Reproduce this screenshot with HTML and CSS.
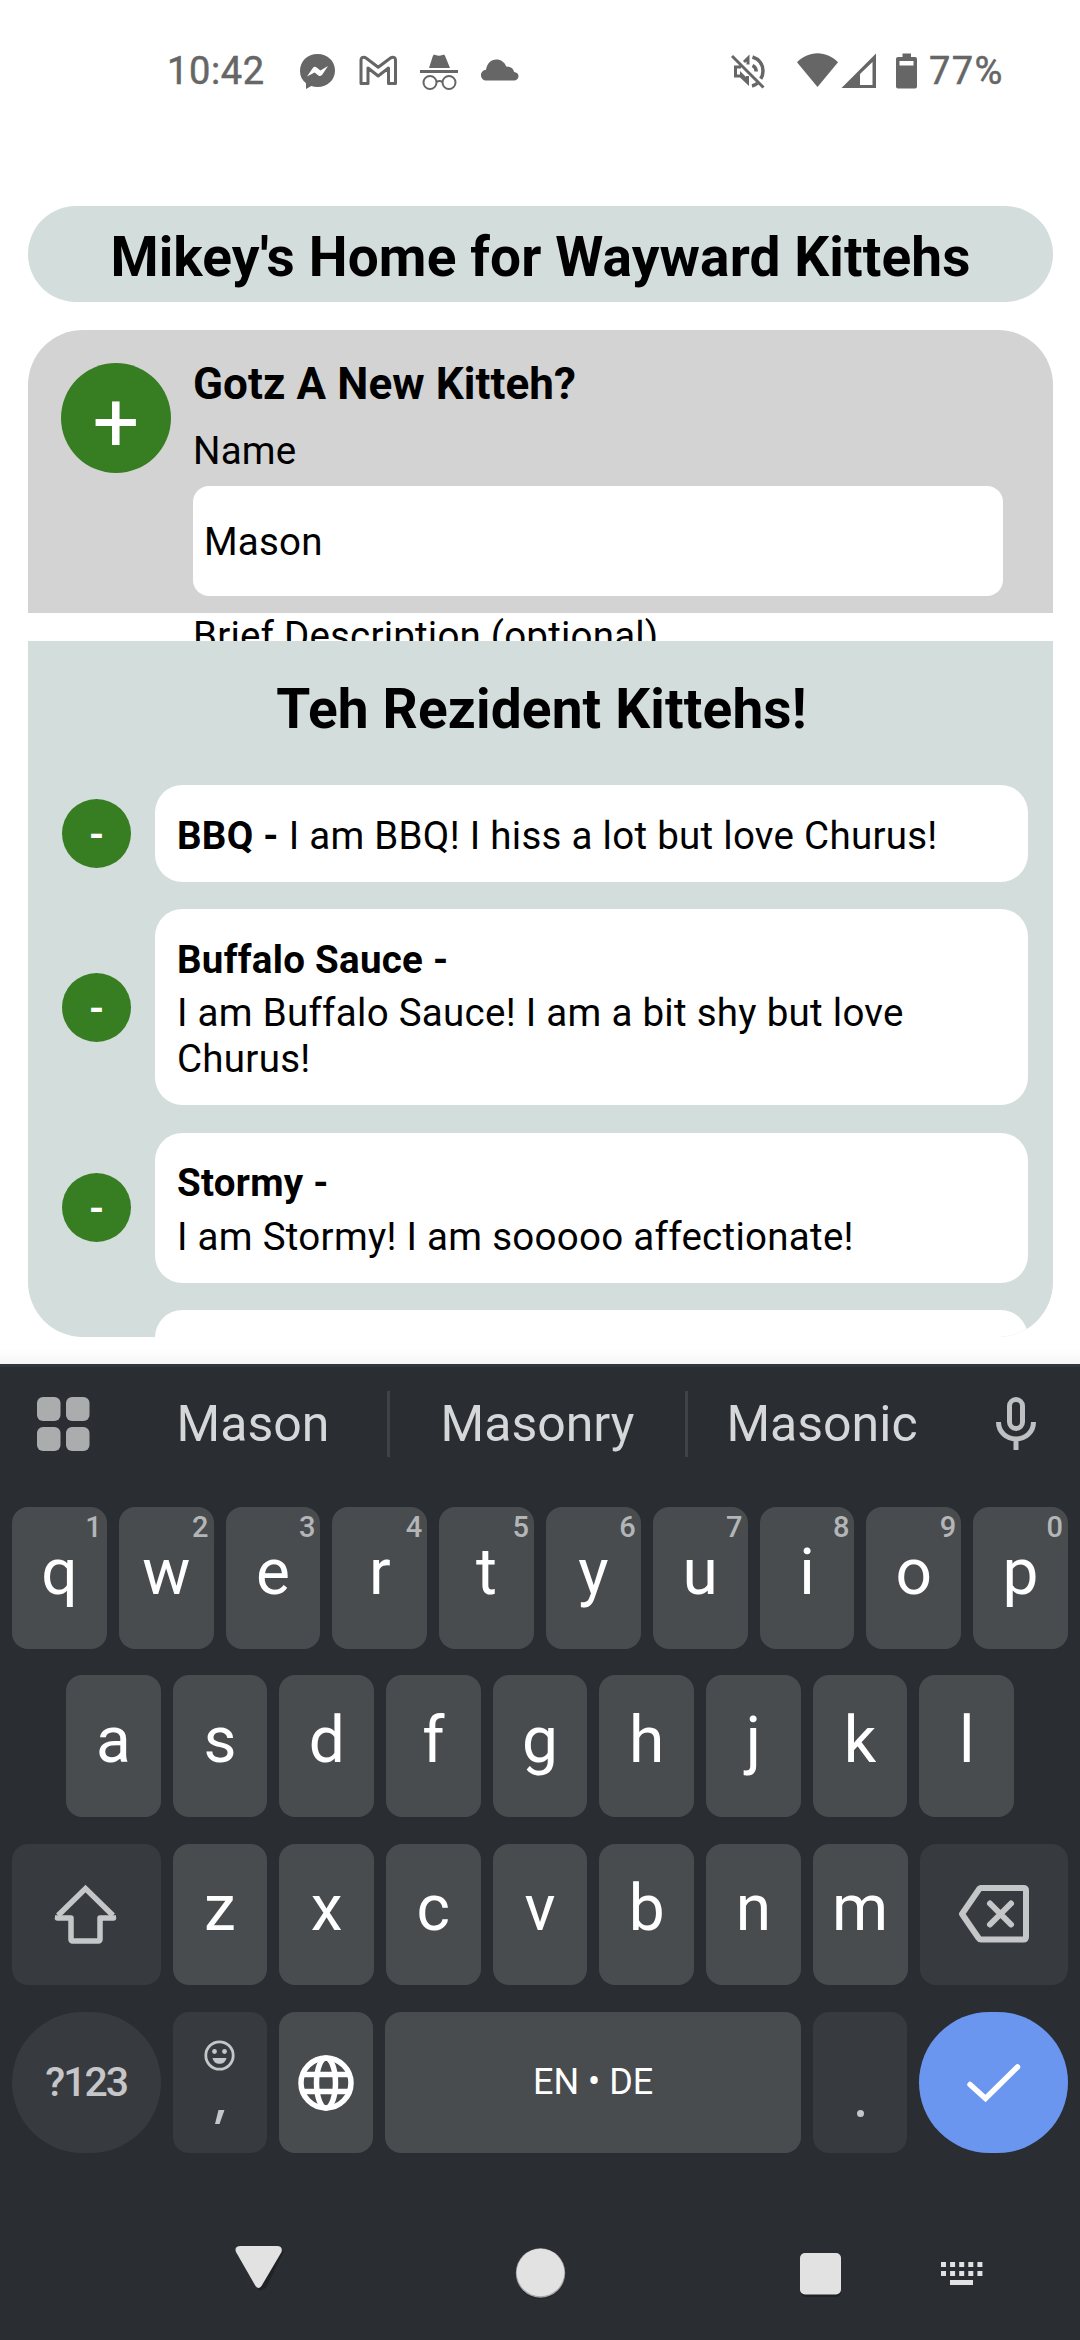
FILE: index.html
```html
<!DOCTYPE html>
<html lang="en">
<head>
<meta charset="utf-8">
<title>Mikey's Home for Wayward Kittehs</title>
<link rel="stylesheet" href="styles.css">
</head>
<body>
<div class="screen">
  <header class="status">
    <div class="status-left">
      <span class="clock">10:42</span>
      <svg width="36" height="46" viewBox="300 48 36 46"><path fill="#666" d="M317.500 54c-10 0-17.500 7.300-17.500 17 0 5.200 2.200 9.300 6 12.300V89l5.300-2.900c1.900.6 4 .9 6.200.9 10 0 17.500-7 17.500-16.500S327.500 54 317.500 54z"/><path fill="#fff" d="M307 76.500 312.800 68c1-1.300 2.600-1.500 3.800-.6l3.800 3L328 66l-5.800 8.800c-.9 1.300-2.600 1.500-3.800.6l-3.800-3z"/></svg>
      <svg width="38" height="46" viewBox="359 48 38 46"><path fill="none" stroke="#666" stroke-width="3" stroke-linejoin="round" d="M361 83.500V60c0-3 3-3.500 5-2l12.200 9.300L390.500 58c2-1.500 5-1 5 2v23.500h-7V68l-10.300 8-10.200-8v15.500z"/></svg>
      <svg width="38" height="46" viewBox="420 48 38 46"><path fill="#666" d="M429 68l3.700-11.500c.5-1.800 1.500-2 2.800-1.500 2.300.9 4.700.9 7 0 1.300-.5 2.300-.3 2.800 1.500L450 68zM420 70h38v3h-38z"/><g fill="none" stroke="#666" stroke-width="2"><circle cx="430" cy="82.500" r="6.500"/><circle cx="449" cy="82.500" r="6.500"/><path d="M436.500 82c2-1.200 4-1.200 6 0"/></g></svg>
      <svg width="38" height="46" viewBox="482 48 38 46"><path fill="#666" d="M487.500 80.500c-3.200 0-5.500-2.400-5.500-5.300 0-3 2.300-5.200 5-5.400C488 63.500 492 59.500 497.300 59.500c4.700 0 8.300 2.700 9.900 7 4.300-.2 7.300 2.300 7.900 5.500 2.600.2 4.400 1.900 4.400 4.200 0 2.500-2 4.300-4.500 4.300z"/></svg>
    </div>
    <div class="status-right">
      <svg width="34" height="46" viewBox="731 48 34 46"><path fill="none" stroke="#666" stroke-width="3" d="M732 56l31.500 31.500M741 67h-5.500v9h5l7 6.500V76M744 62l4-4v6.500"/><path fill="#666" d="M748 79l-8-8v5l8 8z"/><path fill="none" stroke="#666" stroke-width="3.500" d="M752.500 57c6.500 2 10.500 7.500 10.500 14 0 3-.8 5.500-2.300 7.800M752.500 65.500c2.500 1.200 3.700 3 3.700 6M752 86c2.500-.6 4.300-1.600 5.500-2.700"/></svg>
      <svg width="42" height="46" viewBox="797 48 42 46"><path fill="#666" d="M797 62.300c5.500-5.500 12.500-9 20.500-9s15 3.500 20.500 9L817.500 87z"/></svg>
      <svg width="35" height="46" viewBox="841 48 35 46"><path fill="#666" fill-rule="evenodd" d="M841.500 88 876 53.500V88zM860 74v11h12.500V62z"/></svg>
      <svg width="22" height="46" viewBox="896 48 22 46"><path fill="#666" fill-rule="evenodd" d="M902.500 53.500h8.500V57h4a2 2 0 0 1 2 2v27.500a2 2 0 0 1-2 2h-17a2 2 0 0 1-2-2V59a2 2 0 0 1 2-2h4.500zM899.500 61v4.500h14V61z"/></svg>
      <span class="percent">77%</span>
    </div>
  </header>

  <main class="app">
    <h1 class="title">Mikey's Home for Wayward Kittehs</h1>

    <section class="form">
      <button class="round add">+</button>
      <div class="fields">
        <h2 class="form-title">Gotz A New Kitteh?</h2>
        <div class="label">Name</div>
        <div class="input">Mason</div>
        <div class="label next">Brief Description (optional)</div>
      </div>
    </section>

    <section class="list">
      <h1 class="list-title">Teh Rezident Kittehs!</h1>
      <div class="row"><button class="round remove">-</button><div class="card"><b>BBQ -</b> I am BBQ! I hiss a lot but love Churus!</div></div>
      <div class="row"><button class="round remove">-</button><div class="card"><b class="name">Buffalo Sauce -</b>I am Buffalo Sauce! I am a bit shy but love Churus!</div></div>
      <div class="row"><button class="round remove">-</button><div class="card"><b class="name">Stormy -</b>I am Stormy! I am sooooo affectionate!</div></div>
      <div class="row top"><div class="card empty"></div></div>
    </section>
  </main>

  <section class="keyboard">
    <div class="suggestions">
      <svg class="apps" width="53" height="54" viewBox="0 0 53 54" fill="#abacae"><rect width="23.500" height="24" rx="6"/><rect x="29" width="23.500" height="24" rx="6"/><rect y="30" width="23.500" height="24" rx="6"/><rect x="29" y="30" width="23.500" height="24" rx="6"/></svg>
      <span class="word">Mason</span>
      <span class="word mid">Masonry</span>
      <span class="word">Masonic</span>
      <svg class="mic" width="40" height="54" viewBox="996 1397 40 54" fill="none" stroke="#bfc0c2" stroke-width="5"><rect x="1009.500" y="1399.500" width="13" height="29" rx="6.500"/><path d="M998.500 1422c0 10 8 17 17.500 17s17.500-7 17.500-17M1016 1439v11"/></svg>
    </div>

    <div class="keys">
      <div class="key">q<sup>1</sup></div><div class="key">w<sup>2</sup></div><div class="key">e<sup>3</sup></div><div class="key">r<sup>4</sup></div><div class="key">t<sup>5</sup></div><div class="key">y<sup>6</sup></div><div class="key">u<sup>7</sup></div><div class="key">i<sup>8</sup></div><div class="key">o<sup>9</sup></div><div class="key">p<sup>0</sup></div>
    </div>
    <div class="keys inset">
      <div class="key">a</div><div class="key">s</div><div class="key">d</div><div class="key">f</div><div class="key">g</div><div class="key">h</div><div class="key">j</div><div class="key">k</div><div class="key">l</div>
    </div>
    <div class="keys">
      <div class="key dark wide"><svg width="64" height="62" viewBox="54 1882 64 62" fill="none" stroke="#c5c6c8" stroke-width="5.500" stroke-linejoin="round"><path stroke-linejoin="miter" d="M58 1914.500 85.500 1887.500 113 1914.500"/><path d="M58 1914.500l-.5 2.500H71v21.500a1.500 1.500 0 0 0 1.500 1.500h26a1.500 1.500 0 0 0 1.500-1.500V1917h13.500l-.5-2.500"/></svg></div>
      <div class="key">z</div><div class="key">x</div><div class="key">c</div><div class="key">v</div><div class="key">b</div><div class="key">n</div><div class="key">m</div>
      <div class="key dark wide"><svg width="72" height="60" viewBox="956 1884 72 60" fill="none" stroke="#c5c6c8" stroke-width="6" stroke-linejoin="round"><path d="M979 1888h42.500q2.500 0 2.500 2.500v46q0 3-2.500 3H979q-1.500 0-2.500-1.500L960 1914l16.500-24q1-2 2.500-2z"/><path stroke-linecap="round" d="M988 1903.500l21 21M1009 1903.500l-21 21"/></svg></div>
    </div>
    <div class="keys">
      <div class="key dark wide pill">?123</div>
      <div class="key dark comma"><svg width="31" height="31" viewBox="-15.500 -15.500 31 31"><circle r="13.700" fill="none" stroke="#c5c6c8" stroke-width="2.800"/><circle cx="-5" cy="-4" r="2.400" fill="#c5c6c8"/><circle cx="5" cy="-4" r="2.400" fill="#c5c6c8"/><path fill="#c5c6c8" d="M-7 2.500H7C6 6.500 3.500 8.300 0 8.300S-6 6.500-7 2.500z"/></svg><svg class="comma-mark" width="12" height="16" viewBox="0 0 12 16"><path fill="#c5c6c8" d="M4.500 1H10.500L5.500 15H1z"/></svg></div>
      <div class="key globe"><svg width="56" height="56" viewBox="-28 -28 56 56" fill="none" stroke="#fff" stroke-width="5.500"><circle r="25"/><ellipse rx="9.500" ry="25"/><path d="M-24-8.500H24M-24 8.500H24"/></svg></div>
      <div class="key space">EN • DE</div>
      <div class="key dark dot"><i></i></div>
      <div class="key wide pill enter"><svg width="56" height="42" viewBox="966 2061 56 42" fill="none" stroke="#fff" stroke-width="5.500" stroke-linecap="round"><path stroke-linejoin="miter" d="M970 2083.500l15.500 14L1017.500 2066"/></svg></div>
    </div>

    <nav class="nav">
      <svg width="1080" height="70" viewBox="0 2240 1080 70">
        <path fill="#1f2225" d="M244 2252h40l-18 37-7 3z"/>
        <path fill="#e2e2e2" d="M241 2247h36q6 0 4.500 6l-20 34q-3 4-6 0l-19.500-34q-2-6 4.500-6z"/>
        <circle cx="540.500" cy="2276" r="24" fill="#1f2225"/><circle cx="540.500" cy="2274" r="24.700" fill="#a3a4a5"/><circle cx="540.500" cy="2273.500" r="23.800" fill="#e2e2e2"/>
        <rect x="801" y="2257" width="40" height="41" rx="5" fill="#1f2225"/><rect x="800" y="2254" width="41" height="41.500" rx="5" fill="#e2e2e2"/>
        <path stroke="#e2e2e2" stroke-width="5" stroke-dasharray="5 4.100" d="M941 2265.500h42M941 2274.500h42"/><path fill="#e2e2e2" d="M950 2281h23v5h-23z"/>
      </svg>
    </nav>
  </section>
</div>
</body>
</html>
```
FILE: styles.css
```css
* { box-sizing: border-box; }
body { margin: 0; background: #fff; font-family: Roboto, sans-serif; color: #000; }
h1, h2 { margin: 0; }
button { border: 0; padding: 0; font-family: inherit; }
svg { display: block; flex: none; }

.screen { width: 1080px; height: 2340px; overflow: hidden; display: flex; flex-direction: column; }

.status { height: 206px; padding: 48px 75px 0 167px; display: flex; justify-content: space-between; color: #666; font-size: 38px; font-weight: 400; line-height: 46px; -webkit-text-stroke: 0.5px #666; }
.status-left, .status-right { display: flex; height: 46px; }
.clock { width: 133px; letter-spacing: 0.6px; }
.status-left svg + svg { margin-left: 23px; }
.status-right svg:nth-child(1) { margin-right: 32px; }
.status-right svg:nth-child(2) { margin-right: 2px; }
.status-right svg:nth-child(3) { margin-right: 20px; }
.status-right svg:nth-child(4) { margin-right: 11px; }
.percent { width: 76px; letter-spacing: 1.4px; }

.app { height: 1158px; padding: 0 27px 27px 28px; background: linear-gradient(#fff 1142px, #f6f6f6 1158px); }
.title { height: 96px; padding-top: 19px; border-radius: 48px; background: #d3dddb; font-size: 55px; line-height: 64px; letter-spacing: 0.12px; text-align: center; white-space: nowrap; }

.form { margin-top: 28px; height: 283px; padding: 28px 50px 0 33px; display: flex; gap: 22px; border-radius: 55px 55px 0 0; background: #d3d3d3; }
.round { flex: none; border-radius: 50%; background: #377d22; color: #fff; text-align: center; }
.add { width: 110px; height: 110px; margin-top: 5px; padding-top: 9px; font-size: 82.5px; line-height: 101px; }
.fields { flex: 1; letter-spacing: 0.2px; }
.form-title { font-size: 44px; line-height: 52px; letter-spacing: 0.1px; }
.label { margin-top: 17.5px; font-size: 38.5px; line-height: 46px; }
.input { margin-top: 12.5px; height: 110px; padding: 1px 11px 0; border-radius: 16px; background: #fff; font-size: 38.5px; line-height: 110px; }
.label.next { margin-top: 17px; }

.list { position: relative; margin-top: 28px; height: 696px; padding: 36px 25px 0 34px; overflow: hidden; border-radius: 0 0 55px 55px; background: #d3dddb; }
.list-title { margin-bottom: 44px; font-size: 55px; line-height: 64px; letter-spacing: 0.15px; text-align: center; padding-left: 0; margin-left: -7px; }
.row { display: flex; align-items: center; gap: 24px; margin-bottom: 27.8px; }
.remove { width: 69px; height: 69px; padding-top: 2px; font-size: 38.5px; font-weight: 700; line-height: 67px; }
.card { flex: 1; padding: 27.5px 22px 23px; border-radius: 27.5px; background: #fff; font-size: 38.5px; line-height: 46px; letter-spacing: 0.28px; }
.name { display: block; margin-bottom: 7.3px; }
.row.top { padding-left: 93px; }
.empty { height: 97px; }

.keyboard { flex: 1; border-top: 3px solid #31373c; background: #2a2d32; display: flex; flex-direction: column; }
.suggestions { height: 114px; margin-bottom: 26px; padding-left: 37px; display: flex; align-items: center; color: #d6d7d8; font-size: 50px; }
.apps { margin-right: 29px; }
.word { width: 268px; height: 66px; line-height: 66px; text-align: center; }
.word.mid { width: 301px; border: solid #404347; border-width: 0 3px; }
.mic { margin-left: 40px; }

.keys { display: flex; gap: 12px; height: 141.5px; margin: 0 12px 26.8px; }
.keys.inset { margin: 0 66px 26.8px; }
.key { position: relative; flex: 1; padding-bottom: 11px; display: flex; align-items: center; justify-content: center; border-radius: 16px; background: #484c4f; color: #fff; font-size: 64px; line-height: 75px; }
.key sup { position: absolute; top: 3px; right: 5px; font-size: 29px; line-height: 34px; font-weight: 500; color: #b4b5b7; }
.dark { background: #373a3f; color: #c5c6c8; }
.wide { flex: 0 0 148.500px; padding-bottom: 0; }
.pill { border-radius: 74px; font-size: 41px; font-weight: 500; letter-spacing: -2px; }
.comma { flex-direction: column; justify-content: flex-start; padding: 28px 0 0; }
.comma-mark { margin-top: 38px; }
.globe { padding: 0; }
.space { flex: 0 0 416px; padding: 0; font-size: 36px; }
.dot { align-items: flex-start; padding: 98px 0 0; }
.dot i { width: 7px; height: 7px; border-radius: 50%; background: #c5c6c8; }
.enter { background: #6a96ef; }

.nav { margin-top: 59px; height: 70px; }
```
